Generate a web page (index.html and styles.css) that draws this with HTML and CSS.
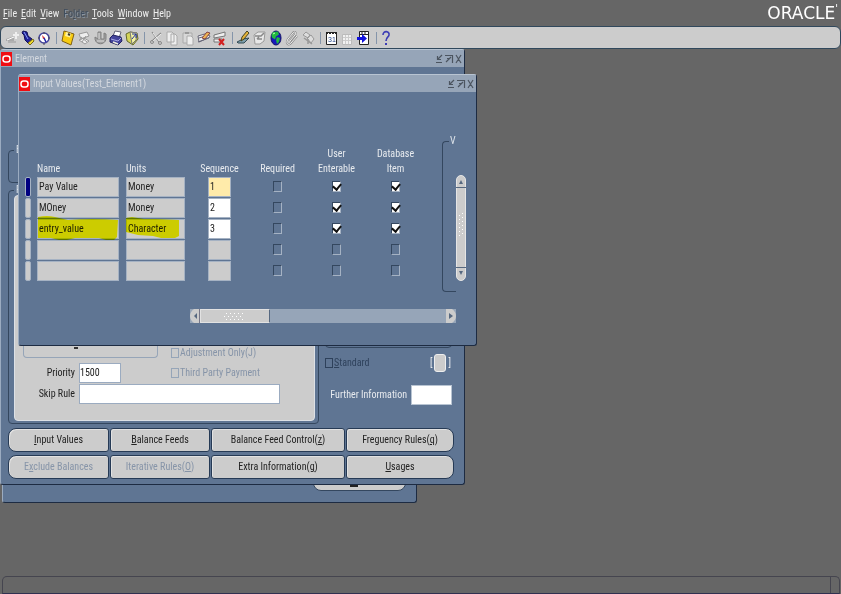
FILE: index.html
```html
<!DOCTYPE html>
<html lang="en">
<head>
<meta charset="utf-8">
<title>Oracle Applications - Input Values</title>
<link rel="stylesheet" href="styles.css">
</head>
<body>
<header class="menubar">
  <nav class="menus">
    <a href="#"><u>F</u>ile</a>
    <a href="#"><u>E</u>dit</a>
    <a href="#"><u>V</u>iew</a>
    <a href="#" class="off">Fo<u>l</u>der</a>
    <a href="#"><u>T</u>ools</a>
    <a href="#"><u>W</u>indow</a>
    <a href="#"><u>H</u>elp</a>
  </nav>
  <div class="brand">ORACLE<sup>'</sup></div>
</header>

<div class="toolbar" role="toolbar" aria-label="Main toolbar">
  <button aria-label="New"><svg viewBox="0 0 16 16"><path d="M2 9l8-3v5H2z" fill="#aaa"/><path d="M3 10l7-3" stroke="#fff"/><path d="M12 2v7M9 5h6" stroke="#eee" stroke-width="2"/><path d="M4 12h8" stroke="#999"/></svg></button>
  <button aria-label="Find"><svg viewBox="0 0 16 16"><path d="M3 1l4 1 1 4 4 3-3 5-4-4-1-5-2-2z" fill="#22229a" stroke="#111155"/><path d="M4 2l4 7" stroke="#8ba0f5"/><path d="M8 13l5-4 1 2-4 4z" fill="#eeda30" stroke="#77691c"/></svg></button>
  <button aria-label="Show Navigator"><svg viewBox="0 0 16 16"><circle cx="8" cy="8" r="5" fill="#fff" stroke="#44449a" stroke-width="1.500"/><path d="M6 5l3 3-2 1z" fill="#d33"/><path d="M8 8l2 4" stroke="#22a" stroke-width="1.500"/><path d="M8 2v2M8 13v2M2 8h2M12 8h2" stroke="#445"/></svg></button>
  <i></i>
  <button aria-label="Save"><svg viewBox="0 0 16 16"><path d="M4 1l10 3-3 11-9-4z" fill="#f8cc12" stroke="#806010"/><path d="M6 2l5 1.500-1 4-5-1.500z" fill="#fff3a0"/><path d="M8 4l2 1" stroke="#333" stroke-width="2"/></svg></button>
  <button aria-label="Next Step"><svg viewBox="0 0 16 16"><path d="M3 4l8-2 2 4-8 3zM3 10l5-2 5 3-4 3z" fill="#eee" stroke="#999"/><path d="M5 7l6 5M10 6l-4 6" stroke="#999"/></svg></button>
  <button aria-label="Switch Responsibility"><svg viewBox="0 0 16 16"><path d="M3 7c-1 9 12 9 11 0V4l-2-1v6H9V2H6v7z" fill="#a2a2a2" stroke="#808080"/><path d="M5 11h7M7 3v6" stroke="#ddd"/></svg></button>
  <button aria-label="Print"><svg viewBox="0 0 16 16"><path d="M5 6l2-5 6 1-2 6z" fill="#fff" stroke="#667"/><path d="M2 8l3-3 8 2 1 4-4 4-8-3z" fill="#44449c" stroke="#222260"/><path d="M3 9l7 2 3-3" stroke="#a9a9e8" fill="none"/><path d="M5 12l5 2" stroke="#eed" stroke-width="1.500"/></svg></button>
  <button aria-label="Close Form"><svg viewBox="0 0 16 16"><path d="M2 4l4-2 7 1 1 6-5 6-6-4z" fill="#d4d45a" stroke="#63672a"/><path d="M6 2l7 1-1 7-4 4z" fill="#f3f3a0" stroke="#777"/><path d="M8 4h4v4M12 4L8 9" stroke="#2233a0" fill="none"/></svg></button>
  <i></i>
  <button aria-label="Cut"><svg viewBox="0 0 16 16"><path d="M4 2l7 10M13 3L4 11" stroke="#888" stroke-width="1.200"/><path d="M5 3l7 9M13 4l-8 7" stroke="#eee"/><circle cx="4" cy="12" r="1.500" fill="none" stroke="#888"/><circle cx="12" cy="13" r="1.500" fill="none" stroke="#888"/></svg></button>
  <button aria-label="Copy"><svg viewBox="0 0 16 16"><path d="M3 2h5l2 2v8H3zM7 4h4l2 2v9H7z" fill="#eee" stroke="#aaa"/></svg></button>
  <button aria-label="Paste"><svg viewBox="0 0 16 16"><path d="M3 3h9v10H3z" fill="#d8d8d8" stroke="#aaa"/><path d="M5 2h4v2H5z" fill="#999"/><path d="M7 6h4l2 2v7H7z" fill="#eee" stroke="#aaa"/></svg></button>
  <button aria-label="Clear Record"><svg viewBox="0 0 16 16"><path d="M2 6l10-3 2 4-11 5z" fill="#eee" stroke="#667"/><path d="M3 8l10-3M2 12l11-4" stroke="#667"/><path d="M6 8l5-6 3 1-5 6z" fill="#efb650" stroke="#844"/></svg></button>
  <button aria-label="Delete Record"><svg viewBox="0 0 16 16"><path d="M2 5l11-3v4L2 8zM2 9h8v3H2z" fill="#eee" stroke="#777"/><path d="M7 9l5 6M12 9l-5 6" stroke="#d22020" stroke-width="2"/></svg></button>
  <i></i>
  <button aria-label="Edit Field"><svg viewBox="0 0 16 16"><path d="M1 12l6-3 6-1-5 5H2z" fill="#7d9dab" stroke="#354c55"/><path d="M5 11l1-4 5-6 2 2-5 6z" fill="#e6b338" stroke="#442"/></svg></button>
  <button aria-label="Zoom"><svg viewBox="0 0 16 16"><path d="M2 5l4-3h7l-1 9-4 3H3z" fill="#e8e8e8" stroke="#999"/><path d="M3 6h6l3-3M5 9h5M5 9l2-2" stroke="#888" fill="none" stroke-width="1.500"/></svg></button>
  <button aria-label="Translations"><svg viewBox="0 0 16 16"><ellipse cx="8" cy="8" rx="5" ry="7" fill="#1717bc" stroke="#101065"/><path d="M5 2l5-.500 1 3-3 2-1 3-3-2-.500-3zM9 7l3 1-1 4-2 2-1-4z" fill="#22bb40"/><path d="M5 4l2-1" stroke="#c0ffc0"/></svg></button>
  <button aria-label="Attachments"><svg viewBox="0 0 16 16"><path d="M6 11l5-6c2-3-1-4-2-2l-5 6c-3 5 1 7 3 4l6-7" fill="none" stroke="#888" stroke-width="2"/><path d="M6 11l5-6c2-3-1-4-2-2l-5 6c-3 5 1 7 3 4l6-7" fill="none" stroke="#f2f2f2"/></svg></button>
  <button aria-label="Folder Tools"><svg viewBox="0 0 16 16"><path d="M3 5l3-3 4 3-2 3zM7 8l4-3 3 4-3 4z" fill="#ddd" stroke="#999"/><path d="M4 8l8 6M8 9v5" stroke="#999" stroke-width="1.500"/></svg></button>
  <i></i>
  <button aria-label="Calendar"><svg viewBox="0 0 16 16"><path d="M2.500 2.500h10v12h-10z" fill="#fff" stroke="#222"/><path d="M2 3h11" stroke="#222" stroke-width="2" stroke-dasharray="2 1"/><text x="4" y="12" class="day">31</text></svg></button>
  <button aria-label="Schedule"><svg viewBox="0 0 16 16"><path d="M2.500 4.500h9v10h-9z" fill="#f1f1f1" stroke="#bbb"/><path d="M3 7.500h8M3 10.500h8M5.500 5v9M8.500 5v9" stroke="#ccc"/></svg></button>
  <button aria-label="Go To"><svg viewBox="0 0 16 16"><path d="M3.500 1.500h9v13h-9z" fill="#fff" stroke="#222"/><path d="M3 4.500h10M6 1v4M9 1v4" stroke="#222"/><path d="M1 7h5V4l5 4.500L6 13v-3H1z" fill="#1111dd"/></svg></button>
  <i></i>
  <button aria-label="Help"><svg viewBox="0 0 16 16"><path d="M3 5c0-5 7-4 6 0 0 2-3 2-3 6" fill="none" stroke="#3d3db5" stroke-width="1.600"/><path d="M5 13h2v2H5z" fill="#3d3db5"/></svg></button>
</div>

<main class="desktop">
  <section class="window base">
    <button class="tail" aria-label="Open"><b></b></button>
  </section>

  <section class="window element">
    <div class="title">
      <svg class="logo" viewBox="0 0 11 14"><path d="M0 0h11v14H0z" fill="#f00d12"/><rect x="2" y="4" width="7" height="6" rx="2.500" fill="none" stroke="#fff" stroke-width="1.500"/></svg>
      <h2>Element</h2>
      <svg class="controls" viewBox="0 0 28 10"><path d="M7 1L3 5M2.500 2v3.500H6M1 8.500h6M10 1.500h7.500V9M16 3l-5 5M12 4.500h3M21 1l5 8M26 1l-5 8" fill="none" stroke="#4c5560" stroke-width="1.200"/></svg>
    </div>
    <div class="form">
      <fieldset class="group upper"><legend>E</legend></fieldset>
      <div class="columns">
        <fieldset class="group lower"><legend>F</legend>
          <div class="panel">
            <div class="line first">
              <div class="subgroup"><b></b></div>
              <label class="check"><input type="checkbox" disabled>Adjustment Only(J)</label>
            </div>
            <div class="line">
              <label class="name" for="priority">Priority</label>
              <input id="priority" class="short" value="1500">
              <label class="check"><input type="checkbox" disabled>Third Party Payment</label>
            </div>
            <div class="line">
              <label class="name" for="skip">Skip Rule</label>
              <input id="skip" class="long">
            </div>
          </div>
        </fieldset>
        <div class="side">
          <div class="sidegroup"></div>
          <div class="standard">
            <label class="check dark"><input type="checkbox" disabled><span><u>S</u>tandard</span></label>
            <span class="flex">[ <input aria-label="Flexfield"> ]</span>
          </div>
          <div class="further">
            <label for="further">Further Information</label>
            <input id="further">
          </div>
        </div>
      </div>
      <div class="buttons">
        <button><u>I</u>nput Values</button>
        <button><u>B</u>alance Feeds</button>
        <button>Balance Feed Control(<u>z</u>)</button>
        <button>Freguency Rules(<u>q</u>)</button>
        <button disabled>E<u>x</u>clude Balances</button>
        <button disabled>Iterative Rules(<u>O</u>)</button>
        <button>Extra Information(<u>g</u>)</button>
        <button><u>U</u>sages</button>
      </div>
    </div>
  </section>

  <section class="window values">
    <div class="title">
      <svg class="logo" viewBox="0 0 11 14"><path d="M0 0h11v14H0z" fill="#f00d12"/><rect x="2" y="4" width="7" height="6" rx="2.500" fill="none" stroke="#fff" stroke-width="1.500"/></svg>
      <h2>Input Values(Test_Element1)</h2>
      <svg class="controls" viewBox="0 0 28 10"><path d="M7 1L3 5M2.500 2v3.500H6M1 8.500h6M10 1.500h7.500V9M16 3l-5 5M12 4.500h3M21 1l5 8M26 1l-5 8" fill="none" stroke="#4c5560" stroke-width="1.200"/></svg>
    </div>
    <div class="grid">
      <table>
        <colgroup><col class="c-mark"><col class="c-name"><col class="c-units"><col class="c-seq"><col class="c-flag"><col class="c-flag"><col class="c-flag"></colgroup>
        <thead>
          <tr><th></th><th class="left">Name</th><th class="left">Units</th><th>Sequence</th><th>Required</th><th>User<br>Enterable</th><th>Database<br>Item</th></tr>
        </thead>
        <tbody>
          <tr><td><span class="mark current"></span></td><td><input class="w-name" aria-label="Name" value="Pay Value"></td><td><input class="w-units" aria-label="Units" value="Money"></td><td class="mid"><input class="w-seq active" aria-label="Sequence" value="1"></td><td class="mid"><input type="checkbox" aria-label="Required"></td><td class="mid"><input type="checkbox" aria-label="User Enterable" checked></td><td class="mid"><input type="checkbox" aria-label="Database Item" checked></td></tr>
          <tr><td><span class="mark"></span></td><td><input class="w-name" aria-label="Name" value="MOney"></td><td><input class="w-units" aria-label="Units" value="Money"></td><td class="mid"><input class="w-seq white" aria-label="Sequence" value="2"></td><td class="mid"><input type="checkbox" aria-label="Required"></td><td class="mid"><input type="checkbox" aria-label="User Enterable" checked></td><td class="mid"><input type="checkbox" aria-label="Database Item" checked></td></tr>
          <tr><td><span class="mark"></span></td><td class="noted"><input class="w-name" aria-label="Name" value="entry_value"><svg class="ink" width="84" height="26" viewBox="0 0 84 26"><path d="M1 1Q10-1 18 1L31 4Q55 2 81 4L80 21 77 24H69L62 22H38L30 24H22L14 22H1Z" fill="#ff0"/></svg></td><td class="noted"><input class="w-units" aria-label="Units" value="Character"><svg class="ink" width="58" height="26" viewBox="0 0 58 26"><path d="M0 2L6 1 18 3 30 3 53 4V20L49 22H35L27 20 12 19 0 16Z" fill="#ff0"/></svg></td><td class="mid"><input class="w-seq white" aria-label="Sequence" value="3"></td><td class="mid"><input type="checkbox" aria-label="Required"></td><td class="mid"><input type="checkbox" aria-label="User Enterable" checked></td><td class="mid"><input type="checkbox" aria-label="Database Item" checked></td></tr>
          <tr><td><span class="mark"></span></td><td><input class="w-name" aria-label="Name"></td><td><input class="w-units" aria-label="Units"></td><td class="mid"><input class="w-seq" aria-label="Sequence"></td><td class="mid"><input type="checkbox" aria-label="Required"></td><td class="mid"><input type="checkbox" aria-label="User Enterable"></td><td class="mid"><input type="checkbox" aria-label="Database Item"></td></tr>
          <tr><td><span class="mark"></span></td><td><input class="w-name" aria-label="Name"></td><td><input class="w-units" aria-label="Units"></td><td class="mid"><input class="w-seq" aria-label="Sequence"></td><td class="mid"><input type="checkbox" aria-label="Required"></td><td class="mid"><input type="checkbox" aria-label="User Enterable"></td><td class="mid"><input type="checkbox" aria-label="Database Item"></td></tr>
        </tbody>
      </table>
      <fieldset class="valid"><legend>V</legend></fieldset>
      <div class="vscroll"><svg width="10" height="106" viewBox="0 0 10 106"><rect x=".5" y=".5" width="9" height="105" rx="4.500" fill="#ccc" stroke="#e5e5e5"/><path d="M0 12.500h10M0 92.500h10" stroke="#566880"/><path d="M3 9l2-4 2 4zM3 96l2 4 2-4z" fill="#566880"/><path d="M3.500 40v24M6.500 38v24" stroke="#fff" stroke-dasharray="1 3"/></svg></div>
    </div>
    <div class="hscroll">
      <svg width="10" height="14" viewBox="0 0 10 14"><path d="M10 0H4Q0 3 0 7t4 7h6z" fill="#ccc"/><path d="M7 4v6L4 7z" fill="#566880"/><path d="M9.500 0v14" stroke="#778"/></svg>
      <span class="thumb"><svg width="22" height="8" viewBox="0 0 22 8"><path d="M2 1.500h20M0 4.500h20M2 7.500h20" stroke="#fff" stroke-dasharray="1 3"/></svg></span>
      <svg class="end" width="10" height="14" viewBox="0 0 10 14"><path d="M0 0h6Q10 3 10 7t-4 7H0z" fill="#ccc"/><path d="M3 4v6l4-3z" fill="#566880"/></svg>
    </div>
  </section>
</main>

<footer class="status"><span></span></footer>
</body>
</html>
```

FILE: styles.css
```css
* { box-sizing: border-box; }
body {
  margin: 0;
  min-height: 100vh;
  display: flex;
  flex-direction: column;
  background: #666;
  color: #222;
  font: 10px/14px "Liberation Sans Narrow", "Roboto Condensed", Roboto, "Liberation Sans", sans-serif;
  overflow: hidden;
}
button, input { font: inherit; color: inherit; margin: 0; padding: 0; border: 0; border-radius: 0; }
fieldset { margin: 0; padding: 0; min-width: 0; border: 1px solid #34475f; border-radius: 4px; }
legend { padding: 0 2px; margin-left: 5px; color: #dde3ea; }
svg { display: block; }

.menubar { display: flex; justify-content: space-between; height: 26px; padding: 0 3px; }
.menus { display: flex; gap: 4px; padding-top: 7px; }
.menus a { color: #eee; text-decoration: none; }
.menus .off { color: #3f4d5e; text-shadow: 1px 1px #8994a0; }
.brand { color: #fff; font: 17px/26px "DejaVu Sans", sans-serif; }
.brand sup { font-size: 10px; line-height: 1px; }

.toolbar {
  display: flex;
  align-items: center;
  height: 23px;
  padding: 0 3px;
  background: #ccc;
  border: 1px solid #30485c;
  border-radius: 6px;
}
.toolbar button { width: 16px; height: 16px; background: none; }
.toolbar svg { width: 16px; height: 16px; }
.toolbar i { width: 1px; height: 12px; margin: 0 3px 0 4px; background: #8595aa; }
.day { font: 7px "Liberation Sans", sans-serif; fill: #224488; }

.desktop { position: relative; flex: 1; }
.window {
  position: absolute;
  display: flex;
  flex-direction: column;
  background: #5f7593;
  border: 1px solid #1d2b42;
  border-top-color: #b8c4d2;
  border-left-color: #9babc0;
  border-radius: 3px;
}
.base { left: 2px; top: 320px; width: 415px; height: 134px; justify-content: flex-end; padding: 0 10px 11px; align-items: flex-end; }
.tail { width: 93px; height: 18px; background: #ccc; border: 1px solid #34475f; border-radius: 8px; }
.tail b { display: block; width: 8px; height: 2px; margin: 8px 0 0 36px; background: #222; }
.element { left: 0; top: 0; width: 465px; height: 436px; }
.values { left: 18px; top: 25px; width: 459px; height: 272px; }
.title { display: flex; align-items: center; height: 17px; flex: none; background: #96a5b8; padding-right: 1px; }
.title h2 { margin: 0 0 0 3px; font-size: 10px; font-weight: 400; color: #d3d8df; }
.logo { width: 11px; height: 14px; }
.controls { width: 28px; height: 10px; margin-left: auto; }

.form { display: flex; flex-direction: column; flex: 1; padding: 76px 10px 6px 7px; }
.upper { height: 40px; }
.columns { display: flex; flex: 1; gap: 6px; }
.lower { width: 311px; display: flex; }
.panel {
  width: 301px;
  height: 226px;
  margin: -2px 0 2px 5px;
  padding-bottom: 16px;
  display: flex;
  flex-direction: column;
  justify-content: flex-end;
  background: #ccc;
  border-radius: 4px;
  border: 1px solid #dde1e6;
}
.line { display: flex; align-items: center; height: 21px; }
.line .name { width: 60px; text-align: right; margin-right: 4px; }
.line.first { height: 18px; }
.line > input { height: 20px; background: #fff; border: 1px solid #9babc0; }
.short { width: 42px; margin-right: 50px; }
.long { width: 201px; }
.subgroup { width: 135px; height: 18px; margin: -9px 13px 0 8px; border: 1px solid #96a5b8; border-top: 0; border-radius: 4px; }
.subgroup b { display: block; width: 4px; height: 2px; margin: 7px 0 0 50px; background: #333; }
.check { display: flex; align-items: center; color: #8694a8; }
.check input { appearance: none; width: 8px; height: 10px; margin-right: 1px; border: 1px solid #96a5b8; }
.check.dark { color: #2e415b; }
.check.dark input { border-color: #2e415b; }

.side { flex: 1; display: flex; flex-direction: column; color: #e8ebef; }
.sidegroup { width: 127px; height: 165px; border: 1px solid #34475f; border-radius: 4px; }
.standard { display: flex; justify-content: space-between; height: 29px; align-items: center; padding-right: 3px; }
.flex { display: flex; align-items: center; gap: 2px; }
.flex input { width: 12px; height: 18px; background: #ccc; border: 1px solid #eee; border-radius: 3px; }
.further { display: flex; align-items: center; justify-content: flex-end; gap: 4px; height: 35px; padding-right: 2px; white-space: nowrap; }
.further input { width: 41px; height: 20px; background: #fff; border: 1px solid #b8c4d2; }

.buttons { display: grid; grid-template-columns: 101px 100px 134px 108px; gap: 3px 1px; margin-top: 4px; }
.buttons button { height: 24px; background: #ccc; border: 1px solid #263a55; border-radius: 3px; box-shadow: inset 1px 1px #e2e2e2; }
.buttons button:nth-child(4n+1) { border-radius: 8px 3px 3px 8px; }
.buttons button:nth-child(4n) { border-radius: 3px 8px 8px 3px; }
.buttons button:disabled { color: #8694a8; }

.grid { display: flex; padding: 42px 9px 0 6px; height: 200px; }
table { width: 400px; height: 134px; margin-top: 12px; flex: none; table-layout: fixed; border-collapse: collapse; }
.c-mark { width: 12px; }
.c-name { width: 89px; }
.c-units { width: 65px; }
.c-seq { width: 57px; }
.c-flag { width: 59px; }
th { height: 29px; padding: 0; vertical-align: bottom; text-align: center; font-weight: 400; line-height: 15px; color: #e8ebef; }
.left { text-align: left; }
td { height: 21px; padding: 0; vertical-align: middle; }
td input { display: block; height: 20px; padding: 0 1px; background: #ccc; border: 1px solid #a5b2c3; }
.mid input { margin: 0 auto; }
.w-name { width: 82px; }
.w-units { width: 59px; }
.w-seq { width: 23px; }
.w-seq.active { background: #ffebaa; }
.w-seq.white { background: #fff; }
td input[type="checkbox"] { appearance: none; width: 9px; height: 11px; padding: 0; background: none; border: 1px solid #34475f; border-right-color: #a5b2c3; border-bottom-color: #a5b2c3; }
td input[type="checkbox"]:checked { background: #fff; }
td input[type="checkbox"]:checked::before { content: ""; display: block; width: 4px; height: 6px; margin: 0 0 0 1px; border: solid #111; border-width: 0 2px 2px 0; transform: rotate(40deg); }
.mark { display: block; width: 6px; height: 20px; background: #ccc; border: 1px solid #a5b2c3; border-radius: 2px; }
.mark.current { background: #000080; }
.noted { position: relative; }
.ink { position: absolute; left: 0; top: -2px; mix-blend-mode: multiply; }
.valid { flex: none; width: 14px; height: 158px; margin: 0 0 0 17px; border-right: 0; border-radius: 4px 0 0 4px; }
.valid legend { padding: 0 1px; margin-left: 6px; }
.vscroll { flex: none; margin-top: 41px; }
.hscroll { display: flex; width: 266px; height: 14px; margin: 17px 0 0 171px; background: #96a5b8; }
.thumb { width: 70px; display: flex; align-items: center; justify-content: center; background: #ccc; border: 1px solid #e2e2e2; border-right-color: #566880; }
.end { margin-left: auto; }

.status { height: 18px; margin: 0 1px 0 2px; border: 1px solid #45454f; border-bottom-color: #303050; border-radius: 5px 5px 0 0; display: flex; justify-content: flex-end; }
.status span { width: 9px; border-left: 1px solid #45454f; }
```
